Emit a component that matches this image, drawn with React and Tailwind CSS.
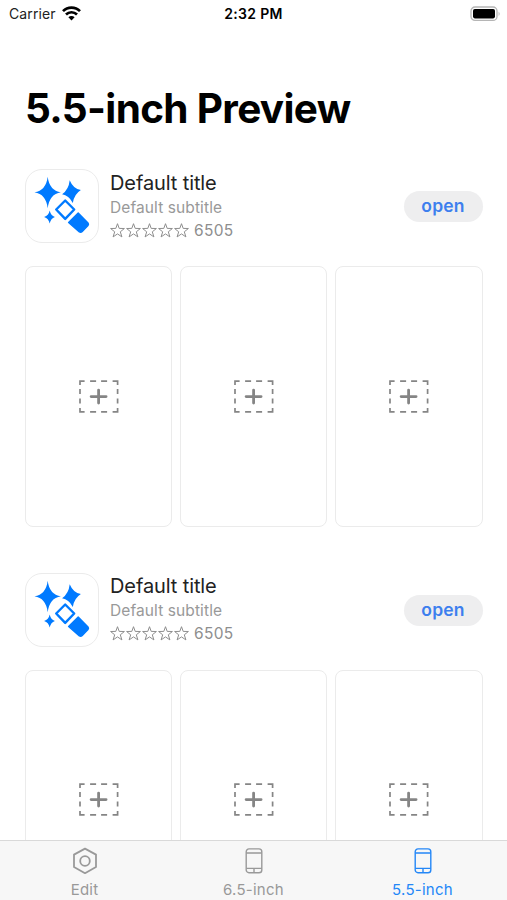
const STAR = "M7.5 0.7 L9.2 5.4 L14.4 5.5 L10.3 8.8 L11.9 13.9 L7.5 10.9 L3.1 13.9 L4.7 8.8 L0.6 5.5 L5.8 5.4 Z";

const apps = [
    { id: 1, title: "Default title", subtitle: "Default subtitle", ratings: 6505 },
    { id: 2, title: "Default title", subtitle: "Default subtitle", ratings: 6505 },
];

const StatusBar = () => (
    <div className="grid h-[27px] shrink-0 grid-cols-3 items-center pl-[9px] pr-[6px] text-[14px] text-[#222]">
        <div className="flex items-center gap-[6px]">
            <span className="tracking-[0.12px]">Carrier</span>
            <svg width="19" height="15" viewBox="0 0 19 15" fill="none" stroke="#000" strokeWidth="2.7">
                <path d="M1 5.1 A12 12 0 0 1 18 5.1" />
                <path d="M4 8.5 A7.8 7.8 0 0 1 15 8.5" />
                <path d="M9.5 14.4 L6.4 11.2 A4.4 4.4 0 0 1 12.6 11.2 Z" fill="#000" stroke="none" />
            </svg>
        </div>
        <span className="-ml-[3px] text-center font-semibold text-black tracking-[0.3px]">2:32 PM</span>
        <svg className="justify-self-end" width="31" height="16" viewBox="0 0 31 16">
            <rect x="1" y="1" width="26" height="13.4" rx="4" fill="#fff" stroke="#b5b5b5" strokeWidth="1.3" />
            <rect x="3" y="3" width="22" height="9.4" rx="1.8" fill="#000" />
            <path d="M28.6 5.4 Q30.6 7.7 28.6 10 Z" fill="#b5b5b5" />
        </svg>
    </div>
);

const WandIcon = () => (
    <svg width="74" height="74" viewBox="0 -0.5 74 74" fill="#007aff" className="-m-px shrink-0">
        <path d="M22.7 7.2 Q24.4 21 35.9 22.8 Q24.4 24.6 22.7 38.8 Q21 24.6 9.5 22.8 Q21 21 22.7 7.2 Z" />
        <path d="M44.7 10.8 Q48.2 19.4 55.9 20.6 Q49.4 24.6 47.8 33.4 Q43.8 25.8 37.1 24.8 Q43.8 20 44.7 10.8 Z" />
        <path d="M24.7 41 Q25.8 46.2 29.9 47.5 Q25.8 48.8 24.7 54 Q23.6 48.8 19.1 47.5 Q23.6 46.2 24.7 41 Z" />
        <path d="M40.2 31 L49.2 40 L40.2 49.4 L31.2 40 Z" fill="none" stroke="#007aff" strokeWidth="2.4" strokeLinejoin="round" />
        <path
            d="M53.2 43.4 L63 53.4 Q64 54.8 63 56 L57 62.2 Q55.8 63.2 54.4 62.4 L43.6 53 Z"
            stroke="#007aff"
            strokeWidth="1.4"
            strokeLinejoin="round"
        />
    </svg>
);

const Stars = () => (
    <div className="-mt-px flex gap-px">
        {[1, 2, 3, 4, 5].map((n) => (
            <svg key={n} width="15" height="15" viewBox="0 0 15 15" fill="none" stroke="#8e8e8e" strokeWidth="1">
                <path d={STAR} />
            </svg>
        ))}
    </div>
);

const Placeholder = () => (
    <div className="flex h-[261px] flex-1 items-center justify-center rounded-[8px] border border-[#ebebeb]">
        <svg width="40" height="34" viewBox="0.4 0.4 40 34" fill="none" stroke="#858585">
            <path d="M1.4 5.5 V1.5 H6 M11.5 1.5 H17.5 M22.5 1.5 H28.5 M34 1.5 H39 V5.5" strokeWidth="1.7" />
            <path d="M1.4 28.5 V32.3 H6 M11.5 32.3 H17.5 M22.5 32.3 H28.5 M34 32.3 H39 V28.5" strokeWidth="1.7" />
            <path d="M1.4 9.5 V14.5 M1.4 19 V24 M39 9.5 V14.5 M39 19 V24" strokeWidth="1.7" />
            <path d="M12.5 17 H27.5 M20 10.5 V23.5" strokeWidth="2.8" strokeLinecap="round" />
        </svg>
    </div>
);

const AppPreview = ({ app }) => (
    <section>
        <div className="flex h-[74px] items-center">
            <div className="flex size-[74px] shrink-0 items-center justify-center rounded-[17px] border border-[#ebebeb]">
                <WandIcon />
            </div>
            <div className="-mt-px ml-[11px] flex-1">
                <h2 className="text-[20px] leading-[26px] tracking-[-0.1px] text-[#222]">{app.title}</h2>
                <p className="text-[15.5px] leading-[24px] tracking-[0.1px] text-[#999]">{app.subtitle}</p>
                <div className="flex items-center gap-[5px] text-[15.5px] leading-[22px] text-[#8e8e8e]">
                    <Stars />
                    <span className="tracking-[0.3px]">{app.ratings}</span>
                </div>
            </div>
            <button className="mt-px h-[31px] w-[79px] rounded-full bg-[#eeeeef] text-[17.5px] font-semibold tracking-[0.2px] text-[#3d7fee]">
                open
            </button>
        </div>
        <div className="mt-[23px] flex gap-[8px]">
            <Placeholder />
            <Placeholder />
            <Placeholder />
        </div>
    </section>
);

const GearIcon = () => (
    <svg width="26" height="28" viewBox="0 0 26 28" fill="none" stroke="#999" strokeWidth="1.8" strokeLinejoin="round">
        <path d="M13 1.6 L24 7.6 V20 L13 26.2 L2 20 V7.6 Z" />
        <circle cx="13" cy="14" r="4.8" />
    </svg>
);

const PhoneIcon = () => (
    <svg width="18" height="28" viewBox="0 0 18 28" fill="none" stroke="currentColor" strokeWidth="1.4">
        <rect x="1.2" y="1.9" width="15.6" height="23.8" rx="2.8" />
        <path d="M1.2 6 H16.8 M1.2 21.4 H16.8 M9 21.4 V25.6" />
    </svg>
);

const TabBar = () => (
    <nav className="grid h-[60px] shrink-0 grid-cols-3 border-t border-[#d9d9d9] bg-[#f7f7f7] text-[15px] leading-[20px] tracking-[0.25px] text-[#999]">
        <div className="flex flex-col items-center pt-[6px]">
            <GearIcon />
            <span className="mt-[5px]">Edit</span>
        </div>
        <div className="flex flex-col items-center pt-[6px]">
            <PhoneIcon />
            <span className="mt-[5px]">6.5-inch</span>
        </div>
        <div className="flex flex-col items-center pt-[6px] text-[#2487f7]">
            <PhoneIcon />
            <span className="mt-[5px]">5.5-inch</span>
        </div>
    </nav>
);

export default function App() {
    return (
        <div className="flex h-[900px] w-[507px] flex-col overflow-hidden bg-white font-['Inter',sans-serif]">
            <StatusBar />
            <main className="min-h-0 flex-1 overflow-hidden pl-[25px] pr-[24.5px]">
                <h1 className="mt-[57px] text-[40.5px] font-bold leading-[50px] tracking-[-0.68px] text-black">5.5-inch Preview</h1>
                <div className="mt-[35px] flex flex-col gap-[45.5px]">
                    {apps.map((app) => (
                        <AppPreview key={app.id} app={app} />
                    ))}
                </div>
            </main>
            <TabBar />
        </div>
    );
}
